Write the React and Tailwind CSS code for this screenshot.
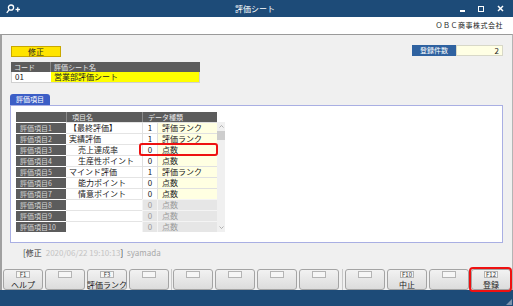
import React from 'react';

const rows = [
  { label: '評価項目1', name: '【最終評価】', sub: false, num: '1', type: '評価ランク', on: true },
  { label: '評価項目2', name: '実績評価', sub: false, num: '1', type: '評価ランク', on: true },
  { label: '評価項目3', name: '売上達成率', sub: true, num: '0', type: '点数', on: true },
  { label: '評価項目4', name: '生産性ポイント', sub: true, num: '0', type: '点数', on: true },
  { label: '評価項目5', name: 'マインド評価', sub: false, num: '1', type: '評価ランク', on: true },
  { label: '評価項目6', name: '能力ポイント', sub: true, num: '0', type: '点数', on: true },
  { label: '評価項目7', name: '情意ポイント', sub: true, num: '0', type: '点数', on: true },
  { label: '評価項目8', name: '', sub: false, num: '0', type: '点数', on: false },
  { label: '評価項目9', name: '', sub: false, num: '0', type: '点数', on: false },
  { label: '評価項目10', name: '', sub: false, num: '0', type: '点数', on: false },
];

function Key({ f, label, hl }) {
  return (
    <div className="relative w-[40px] h-[21px] shrink-0">
      <div className="w-full h-full rounded-[3px] border border-[#a4a4a4] bg-gradient-to-b from-[#f2f2f2] to-[#dcdcdc] flex flex-col items-center">
        <div className="mt-[1px] w-[14px] h-[7px] border border-[#b4b4b4] bg-[#f6f6f6] flex items-center justify-center text-[6px] leading-none text-[#333]">
          {f}
        </div>
        <div className="text-[8px] leading-none mt-[3px] text-[#222] whitespace-nowrap">{label}</div>
      </div>
      {hl && <div className="absolute -left-[2px] -top-[2px] -right-[1px] -bottom-[2px] border-2 border-[#ee1111] rounded-[4px]" />}
    </div>
  );
}

export default function App() {
  return (
    <div className="w-[513px] h-[306px] overflow-hidden flex flex-col font-['Noto_Sans_CJK_JP','Noto_Sans',sans-serif] bg-[#f0f0f0]">
      {/* title bar */}
      <div className="h-[17px] bg-[#1d4b78] flex items-center text-white shrink-0">
        <div className="flex-1 flex items-center pl-[6px]">
          <svg width="15" height="10" viewBox="0 0 15 10" fill="none" stroke="white" strokeWidth="1.3">
            <circle cx="5" cy="3.6" r="2.6" />
            <line x1="3.2" y1="5.6" x2="0.8" y2="8.8" />
            <line x1="9.5" y1="5.5" x2="14" y2="5.5" />
            <line x1="11.75" y1="3.3" x2="11.75" y2="7.7" />
          </svg>
        </div>
        <div className="text-[8px] leading-none">評価シート</div>
        <div className="flex-1 flex items-center justify-end gap-[13px] pr-[9px]">
          <div className="w-[5px] h-[1.5px] bg-white mt-[5px]" />
          <div className="w-[6px] h-[6px] border-[1.5px] border-white" />
          <svg width="7" height="7" viewBox="0 0 7 7" stroke="white" strokeWidth="1.5">
            <line x1="1" y1="1" x2="6" y2="6" />
            <line x1="6" y1="1" x2="1" y2="6" />
          </svg>
        </div>
      </div>
      {/* company strip */}
      <div className="h-[17px] bg-white flex items-center justify-end pr-[10px] shrink-0">
        <span className="text-[7px] leading-none text-[#222] tracking-[0.5px]">ＯＢＣ商事株式会社</span>
      </div>
      {/* main */}
      <div className="flex-1 border-t border-t-[#9a9a9a] border-l-2 border-l-[#a0a0a0] border-r border-r-[#b4b4b4] flex flex-col text-[#222]">
        <div className="pl-[9px] pr-[9px] flex flex-col">
          <div className="mt-[10px] h-[12px] flex justify-between">
            <div className="mt-[1px] w-[50px] h-[11px] bg-[#ffe400] border border-[#c9a800] flex items-center justify-center text-[8px] leading-none">修正</div>
            <div className="flex h-[11px]">
              <div className="w-[44px] bg-[#2f62a0] text-white text-[7px] leading-none flex items-center justify-center">登録件数</div>
              <div className="w-[47px] bg-[#ffffe4] border border-[#d8d8c8] text-[8px] leading-none flex items-center justify-end pr-[3px]">2</div>
            </div>
          </div>
          <div className="mt-[5px] flex flex-col w-[189px]">
            <div className="flex h-[10px] bg-[#5c5c5c] text-[#e8e8e8] text-[7px] leading-none">
              <div className="w-[39px] flex items-center pl-[3px]">コード</div>
              <div className="flex-1 flex items-center pl-[3px] border-l border-l-[#8a8a8a]">評価シート名</div>
            </div>
            <div className="flex h-[11px] text-[8px] leading-none border border-[#d0d0d0] border-t-0">
              <div className="w-[39px] bg-white flex items-center pl-[3px]">01</div>
              <div className="flex-1 bg-[#ffff00] flex items-center pl-[3px]">営業部評価シート</div>
            </div>
          </div>
          {/* tab */}
          <div className="mt-[11px] -ml-[1px] w-[40px] h-[11px] bg-[#3c5ec6] rounded-t-[3px] text-white text-[7px] leading-none flex items-center justify-center">評価項目</div>
          <div className="-ml-[1px] h-[138px] border border-[#a9afe3] bg-white pl-[5px] pt-[6px]">
            <div className="relative flex">
              <div className="grid grid-cols-[50px_76px_15px_60px] text-[8px] leading-none">
                <div className="h-[10px] bg-[#5c5c5c]" />
                <div className="h-[10px] bg-[#5c5c5c] text-[#e8e8e8] text-[7px] flex items-center pl-[5px] border-l border-l-[#8a8a8a]">項目名</div>
                <div className="col-span-2 h-[10px] bg-[#5c5c5c] text-[#e8e8e8] text-[7px] flex items-center pl-[5px] border-l border-l-[#8a8a8a]">データ種類</div>
                {rows.map((r) => (
                  <React.Fragment key={r.label}>
                    <div className="h-[11px] bg-[#5c5c5c] border-t border-t-white text-[#d4d4d4] text-[7px] flex items-center pl-[4px]">{r.label}</div>
                    <div className={`h-[11px] bg-white border-t border-t-[#e4e4e4] flex items-center ${r.sub ? 'pl-[12px]' : 'pl-[3px]'}`}>{r.name}</div>
                    <div className={`h-[11px] border-t border-l flex items-center justify-center ${r.on ? 'bg-white border-[#e0e0e0] text-[#222]' : 'bg-[#e6e6e6] border-[#f4f4f4] text-[#9a9a9a]'}`}>{r.num}</div>
                    <div className={`h-[11px] border-t border-l flex items-center pl-[4px] ${r.on ? 'bg-[#ffffe2] border-[#e0e0e0] text-[#222]' : 'bg-[#e6e6e6] border-[#f4f4f4] text-[#9a9a9a]'}`}>{r.type}</div>
                  </React.Fragment>
                ))}
              </div>
              <div className="mt-[10px] w-[8px] h-[110px] bg-[#f0f0f0] flex flex-col items-center">
                <svg className="mt-[3px]" width="5" height="3" viewBox="0 0 5 3" fill="none" stroke="#a0a0a0" strokeWidth="0.8"><polyline points="0.5,2.5 2.5,0.5 4.5,2.5" /></svg>
                <div className="mt-[3px] w-[8px] h-[9px] bg-[#cdcdcd]" />
                <div className="flex-1" />
                <svg className="mb-[3px]" width="5" height="3" viewBox="0 0 5 3" fill="none" stroke="#a0a0a0" strokeWidth="0.8"><polyline points="0.5,0.5 2.5,2.5 4.5,0.5" /></svg>
              </div>
              <div className="absolute left-[123px] top-[31px] w-[79px] h-[13px] border-2 border-[#ee1111] rounded-[3px]" />
            </div>
          </div>
          <div className="mt-[5px] h-[10px] flex items-center pl-[12px] text-[8px] leading-none">
            <span className="text-[#333]">[修正</span>
            <span className="ml-[4px] text-[#c4c4c4]">2020/06/22 19:10:13</span>
            <span className="text-[#333]">]</span>
            <span className="ml-[4px] text-[#a8a8a8]">syamada</span>
          </div>
        </div>
        {/* function keys */}
        <div className="mt-[11px] ml-[1px] flex items-end h-[21px]">
          <div className="flex gap-[2px]">
            <Key f="F1" label="ヘルプ" />
            <Key f="" label="" />
            <Key f="F3" label="評価ランク" />
            <Key f="" label="" />
          </div>
          <div className="w-[4px] h-full flex justify-center"><div className="w-px h-full bg-[#c8c8c8]" /></div>
          <div className="flex gap-[2px]">
            <Key f="" label="" />
            <Key f="" label="" />
            <Key f="" label="" />
            <Key f="" label="" />
          </div>
          <div className="w-[6px] h-full flex justify-center"><div className="w-px h-full bg-[#c8c8c8]" /></div>
          <div className="flex gap-[2px]">
            <Key f="" label="" />
            <Key f="F10" label="中止" />
            <Key f="" label="" />
            <Key f="F12" label="登録" hl />
          </div>
        </div>
      </div>
      {/* bottom bar */}
      <div className="h-[16px] bg-[#1d4b78] shrink-0 flex justify-end items-end">
        <svg width="6" height="6" viewBox="0 0 6 6" className="mr-[1px] mb-[1px]"><path d="M6 0 L6 6 L0 6 Z" fill="#7d93ad" /></svg>
      </div>
    </div>
  );
}
